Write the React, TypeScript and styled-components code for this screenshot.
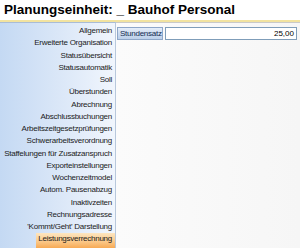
import React from 'react';
import styled, { createGlobalStyle } from 'styled-components';

const GlobalStyle = createGlobalStyle`
  html, body {
    margin: 0;
    padding: 0;
    background: #ffffff;
    overflow: hidden;
  }
`;

const Page = styled.div`
  width: 300px;
  height: 248px;
  display: flex;
  flex-direction: column;
  overflow: hidden;
  font-family: "Liberation Sans", Arial, sans-serif;
`;

const Header = styled.div`
  height: 20px;
  padding-left: 4px;
  font-size: 13.5px;
  font-weight: bold;
  line-height: 20px;
  color: #000;
  white-space: nowrap;
  border-bottom: 2px solid #f2e3a0;
`;

const Body = styled.div`
  flex: 1;
  display: flex;
  min-height: 0;
`;

const Sidebar = styled.div`
  width: 115px;
  display: flex;
  flex-direction: column;
  align-items: flex-end;
  padding-top: 2px;
  background: linear-gradient(to right, #c4d9f3 0%, #dce8f8 55%, #f1f6fd 100%);
  border-top: 1px solid #a9bcd6;
  border-right: 1px solid #b8c8dc;
`;

const NavItem = styled.div<{ $active?: boolean }>`
  flex: none;
  height: ${({ $active }) => ($active ? '15px' : '12.25px')};
  line-height: ${({ $active }) => ($active ? '11.5px' : '12.25px')};
  font-size: 8px;
  letter-spacing: -0.25px;
  color: #1b1b1b;
  padding: 0 3px 0 2px;
  white-space: nowrap;
  background: ${({ $active }) =>
    $active ? 'linear-gradient(to bottom, #fde6c0 0%, #fbc98a 55%, #f7aa55 100%)' : 'transparent'};
`;

const Content = styled.div`
  flex: 1;
  padding: 4px 3px 0 1px;
  background: linear-gradient(to right, #fbfbfb, #f6f6f6);
  border-top: 1px solid #c9c9c9;
`;

const FieldRow = styled.div`
  display: flex;
  height: 13px;
  gap: 2px;
`;

const FieldLabel = styled.div`
  width: 46px;
  padding-left: 2px;
  font-size: 8px;
  letter-spacing: -0.25px;
  line-height: 11px;
  color: #132c52;
  background: linear-gradient(to bottom, #e6eef9 0%, #cddcf0 50%, #bcd0ea 100%);
  border: 1px solid #8ea7c9;
  box-sizing: border-box;
  white-space: nowrap;
`;

const FieldInput = styled.div`
  flex: 1;
  font-size: 8px;
  line-height: 11px;
  text-align: right;
  padding-right: 2px;
  background: #ffffff;
  border: 1px solid #7f9db9;
  box-sizing: border-box;
  color: #000;
`;

const items = [
  'Allgemein',
  'Erweiterte Organisation',
  'Statusübersicht',
  'Statusautomatik',
  'Soll',
  'Überstunden',
  'Abrechnung',
  'Abschlussbuchungen',
  'Arbeitszeitgesetzprüfungen',
  'Schwerarbeitsverordnung',
  'Staffelungen für Zusatzanspruch',
  'Exporteinstellungen',
  'Wochenzeitmodel',
  'Autom. Pausenabzug',
  'Inaktivzeiten',
  'Rechnungsadresse',
  "'Kommt/Geht' Darstellung",
  'Leistungsverrechnung',
];

export default function App() {
  return (
    <Page>
      <GlobalStyle />
      <Header>Planungseinheit: _ Bauhof Personal</Header>
      <Body>
        <Sidebar>
          {items.map((item) => (
            <NavItem key={item} $active={item === 'Leistungsverrechnung'}>
              {item}
            </NavItem>
          ))}
        </Sidebar>
        <Content>
          <FieldRow>
            <FieldLabel>Stundensatz</FieldLabel>
            <FieldInput>25,00</FieldInput>
          </FieldRow>
        </Content>
      </Body>
    </Page>
  );
}
